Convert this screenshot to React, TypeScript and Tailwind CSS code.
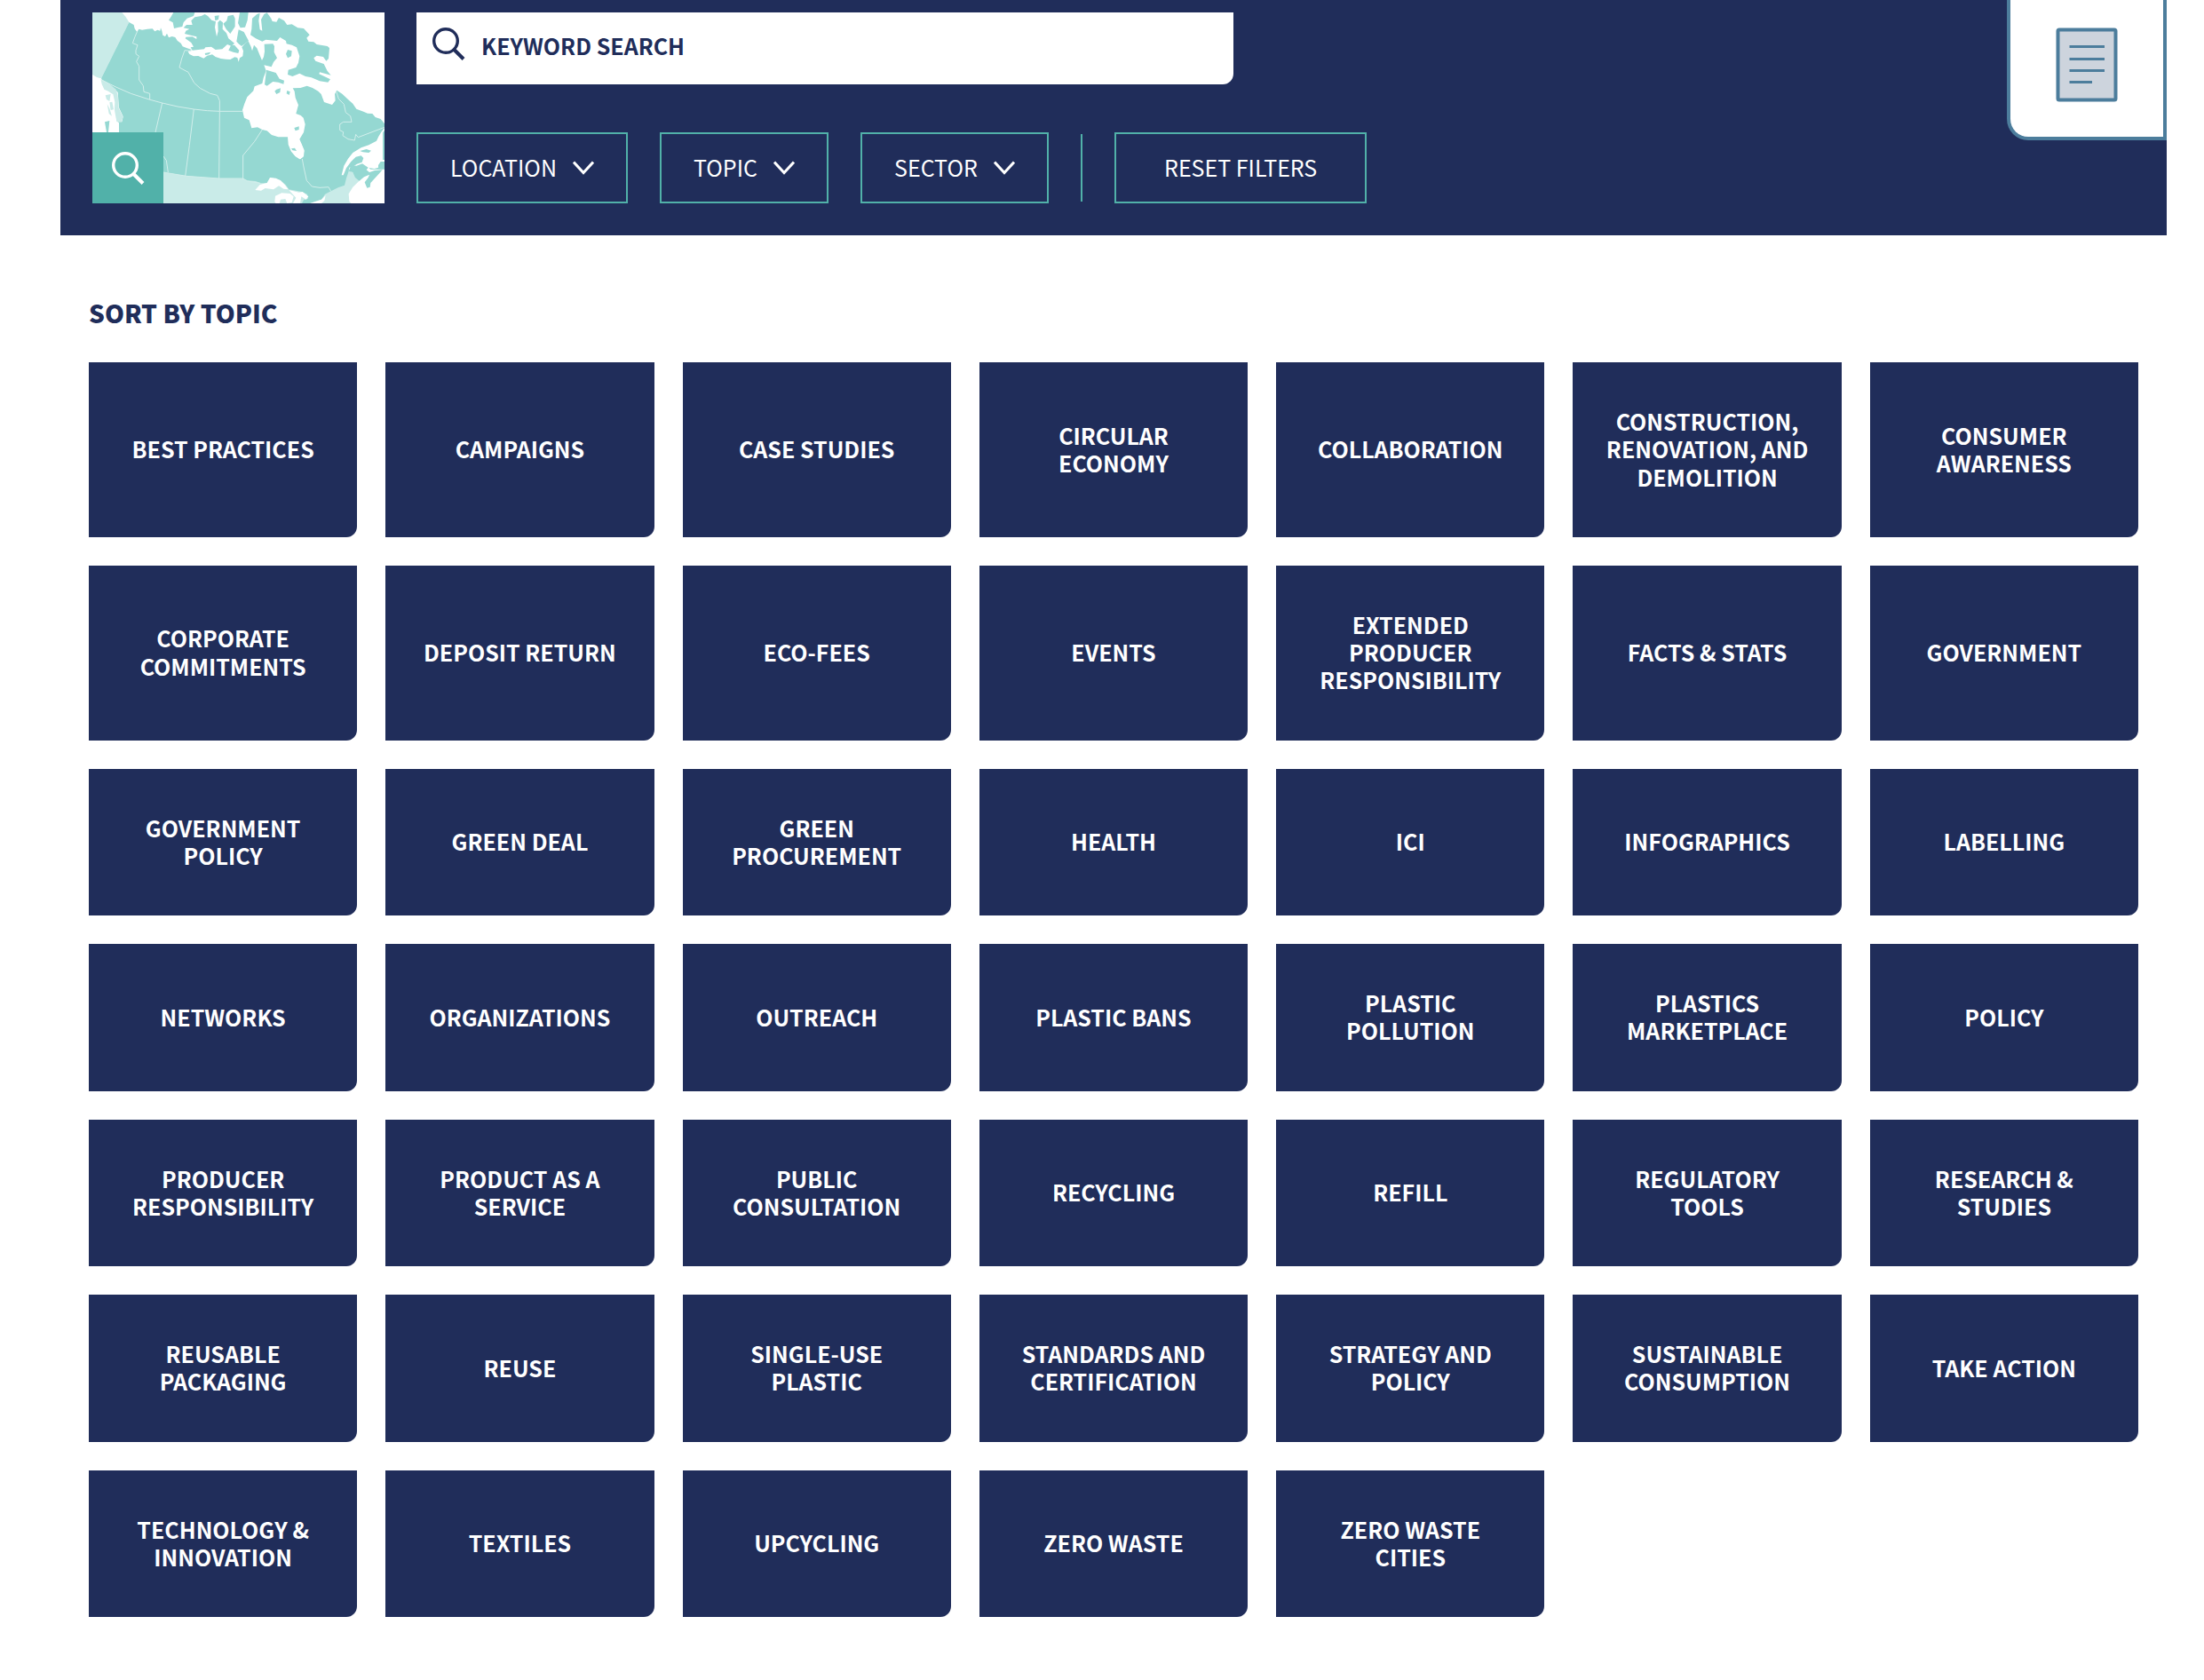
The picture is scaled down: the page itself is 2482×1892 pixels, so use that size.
import React from "react";

const topics = [
  "Best Practices", "Campaigns", "Case Studies", "Circular Economy", "Collaboration",
  "Construction, Renovation, and Demolition", "Consumer Awareness",
  "Corporate Commitments", "Deposit Return", "Eco-Fees", "Events",
  "Extended Producer Responsibility", "Facts & Stats", "Government",
  "Government Policy", "Green Deal", "Green Procurement", "Health", "ICI",
  "Infographics", "Labelling",
  "Networks", "Organizations", "Outreach", "Plastic Bans", "Plastic Pollution",
  "Plastics Marketplace", "Policy",
  "Producer Responsibility", "Product as a Service", "Public Consultation",
  "Recycling", "Refill", "Regulatory Tools", "Research & Studies",
  "Reusable Packaging", "Reuse", "Single-Use Plastic", "Standards and Certification",
  "Strategy and Policy", "Sustainable Consumption", "Take Action",
  "Technology & Innovation", "Textiles", "Upcycling", "Zero Waste", "Zero Waste Cities",
];

function SearchIcon({ className }: { className?: string }) {
  return (
    <svg viewBox="0 0 38 38" fill="none" stroke="currentColor" strokeWidth="3.4" className={className} aria-hidden="true">
      <circle cx="16" cy="16" r="13.3" />
      <path d="M25 25.500L36 36.500" strokeWidth="4" />
    </svg>
  );
}

function CanadaMap() {
  return (
    <svg viewBox="132 42 987 645" preserveAspectRatio="none" className="block h-full w-full" role="img" aria-label="Map of Canada">
      <rect x="132" y="42" width="987" height="645" fill="#fff" />
      {/* Alaska, its panhandle and the United States */}
      <g fill="#c9ebe8">
        <path d="M132 42H232L244 56L256 75L162 265L148 262L132 252Z" />
        <path d="M370 575H660L720 600H800L905 660L985 600L996 576L1012 582L1035 610L1012 632L998 655L1000 680L1006 687H370Z" />
      </g>
      <g fill="#95d8d2">
        {/* mainland */}
        <path d="M256 75L272 84L275 97L283 108L289 98L300 101L318 98L335 97L343 106L352 101L361 104L363 94L367 104L370 119L378 123L384 113L390 127L401 123L412 126L419 137L431 146L437 157L452 163L468 168L455 174L460 183L474 190L490 189L508 197L520 188L537 184L548 192L566 198L583 200L598 201L613 193L622 195L626 209L630 196L640 190L642 172L637 160L647 148L659 139L668 158L672 172L678 152L688 163L696 182L705 204L711 192L714 174L713 149L742 148L747 156L746 176L756 196L744 210L737 226L712 220L719 239L710 263L706 282L680 292L676 307L655 328L646 350L639 372L645 398L662 406L670 433L690 430L706 438L722 442L738 456L760 463L793 463L796 490L805 511L818 528L833 538L846 528L848 508L832 470L846 447L851 420L845 398L836 390L820 384L828 355L818 330L815 308L809 298L835 297L857 290L876 297L895 308L905 318L915 345L942 354L953 340L951 318L958 305L976 317L1000 340L1012 350L1024 368L1048 377L1062 383L1078 384L1088 396L1106 402L1119 418V432L1108 446L1099 461L1092 476L1066 490L1040 499L1012 516L996 536L982 560L974 592L980 592L990 568L1006 546L1022 530L1040 526L1048 534L1043 548L1026 554L1014 562L1000 566L998 578L990 602L984 626L962 634L938 646L918 656L906 674L885 680L868 687H840L846 676L860 672L858 656L840 648L796 640L785 624L766 608L736 600L722 618L700 619L684 612L656 610L641 604L560 603L450 595L372 582L222 575V430L218 412L232 412L236 394L222 364L218 312L208 302L186 302L162 265Z" />
        {/* Maritimes */}
        <path d="M998 578L1006 558L1024 560L1044 553L1064 566L1058 574L1068 582L1086 576L1112 574L1094 594L1072 618L1070 632L1060 635L1052 616L1064 600L1068 590L1050 598L1034 611L1020 600L1012 582Z" />
        <path d="M1066 567L1085 570L1098 566V558L1106 546L1119 546V572H1072Z" />
        <path d="M1036 510L1058 504L1074 509L1066 516L1046 514Z" />
        <path d="M1119 440L1113 448V540H1119Z" />
        {/* Arctic archipelago */}
        <path d="M406 42H478L474 54L452 62L440 76L436 90L424 92L408 96L404 76L390 68L398 56Z" />
        <path d="M478 58L500 54L512 48L522 54L535 68L549 73L546 92L552 124L557 106L556 76L563 68L573 76L572 98L585 112L592 130L612 146L602 156L588 150L571 166L548 168L534 158L514 160L510 166L490 168L470 170L464 160L474 158L466 144L446 130L448 125L470 124L484 132V124L458 118L444 114L448 104L460 98L440 94L450 84L470 84L466 70Z" />
        <path d="M545 54L560 52L558 66L547 70Z" />
        <path d="M590 54L608 50L614 62V90L598 114L584 98L574 80L586 70Z" />
        <path d="M630 42H659L656 68L648 92L632 94L624 78Z" />
        <path d="M626 100L644 108L660 138L636 156L626 148L619 140Z" />
        <path d="M600 154L612 152L628 170L625 180L608 176L592 170Z" />
        {/* Baffin */}
        <path d="M672 62L688 48L698 44L694 70L698 100L706 104L702 66L712 48L722 43L736 62L740 72L754 74L762 60L780 70L790 84L806 82L826 94L846 96L866 118L856 128L862 140L880 142L890 150L926 156L933 162L930 198L922 206L912 192L890 188L880 196L886 206L914 216L926 240L938 254L900 244L898 250L936 268L928 278L900 274L872 262L852 258L832 248L808 258L792 252L794 236L820 228L828 212L832 190L822 160L806 152L788 148L786 138L766 126L756 138L718 134L706 140L684 130L666 118L670 98Z" />
        <path d="M792 168L806 172L804 190L792 196L786 182Z" />
        <path d="M720 236L752 246L764 266L780 272L778 284L760 278L742 276L722 290L714 286Z" />
        <path d="M754 302L768 298L766 312L754 318L748 308Z" />
        <path d="M790 306L800 310L797 321L788 316Z" />
      </g>
      {/* Alaska panhandle */}
      <path fill="#c9ebe8" d="M160 266L185 280L212 302L218 322L221 365L236 396L230 412L214 412L208 378L204 345L200 318L186 308L172 302L164 284Z" />
      <g fill="#fff">
        {/* James Bay */}
        <path d="M792 455H832L828 470L838 486L847 510L844 530L834 538L818 528L804 512L794 488Z" />
        {/* coastal channels */}
        <path d="M132 254L160 268L160 280L172 304L174 350L178 402L174 420L178 447H132Z" />
        <path d="M172 310L202 318L208 345L206 385L214 412L222 415L222 447H190L174 447V345Z" />
        {/* Great Lakes */}
        <path d="M682 642L698 624L722 618L732 600L752 602L768 610L782 624L794 640L778 638L762 628L744 640L716 636L702 644Z" />
        <path d="M748 682L750 662L772 652L800 654L812 664L806 684L790 687L784 672L768 674L764 687H752Z" />
        <path d="M796 642L830 650L842 648L862 664L854 674L838 664L834 686L810 687L820 668Z" />
        <path d="M868 687L888 680L906 674L920 660L916 678L906 687Z" />
      </g>
      {/* islands in the bays and off the Pacific coast */}
      <g fill="#95d8d2">
        <path d="M814 432L830 427V438L818 442Z" />
        <path d="M804 502L816 500L822 510L808 508Z" />
        <path d="M512 180L532 176L526 184L514 186Z" />
        <path d="M174 412L190 408L186 447H180Z" />
      </g>
      <g fill="#c9ebe8">
        <path d="M176 322L194 318L190 342L180 336Z" />
        <path d="M190 346L199 344L204 370L194 372Z" />
        <path d="M182 352L190 366L198 392L188 384Z" />
      </g>
      {/* provincial and territorial borders */}
      <g fill="none" stroke="#d3efec" strokeWidth="3">
        <path d="M162 270L216 296L262 316L324 336L368 348L420 360L475 369L520 374L562 376H640" />
        <path d="M283 108L276 124L268 146L285 152L279 170L279 182L290 190L281 208L290 224V270L304 290L306 310L326 316V336" />
        <path d="M466 172L444 170L434 198L426 228L456 244L476 280L496 298L530 316L554 322L562 340V376L560 604" />
        <path d="M368 348L345 447" />
        <path d="M475 369L460 490L446 595" />
        <path d="M706 438L680 478L641 525V606" />
        <path d="M372 528L382 542L388 582" />
        <path d="M841 537L846 564L856 610L874 630L900 634L930 632L938 646" />
        <path d="M956 308L964 334L982 352L988 380L1004 392L1008 412L980 412L968 420L968 440L980 446L978 458L996 470L1018 474L1022 454L1030 464L1119 430" />
        <path d="M372 582L450 595L560 603H641L656 612L700 619" />
      </g>
    </svg>
  );
}

function FilterSelect({ label }: { label: string }) {
  return (
    <label className="flex h-20 items-center gap-[18px] border-2 border-[#51b1a9] px-9">
      <select aria-label={label} className="appearance-none bg-transparent leading-tight text-white outline-none">
        <option>{label}</option>
      </select>
      <svg viewBox="0 0 24 16" fill="none" stroke="currentColor" strokeWidth="3" className="pointer-events-none h-4 w-6" aria-hidden="true">
        <path d="M1 1.500L12 13.500L23 1.500" />
      </svg>
    </label>
  );
}

export default function App() {
  return (
    <div className="bg-white pb-[72px] font-['Noto_Sans_CJK_SC','Noto_Sans',sans-serif] text-[25px] text-[#202d5a]">
      <header className="mr-[42px] ml-[68px] flex items-start justify-between bg-[#202d5a]">
        <div className="flex gap-9 px-9 pt-3.5 pb-9">
          <div className="relative h-[215px] w-[329px]">
            <CanadaMap />
            <button aria-label="Open map search" className="absolute bottom-0 left-0 flex size-20 items-center justify-center bg-[#51b1a9] text-white">
              <SearchIcon className="size-[38px]" />
            </button>
          </div>
          <div className="flex flex-col justify-between">
            <label className="flex h-[81px] w-[920px] max-w-full items-start gap-[18px] rounded-br-xl bg-white px-[17px] pt-4">
              <SearchIcon className="size-[38px]" />
              <input
                type="text"
                aria-label="Keyword search"
                placeholder="KEYWORD SEARCH"
                className="h-[42px] flex-1 font-bold text-[#202d5a] outline-none placeholder:text-[#202d5a] placeholder:opacity-100"
              />
            </label>
            <div className="flex items-center gap-9 text-white">
              <FilterSelect label="LOCATION" />
              <FilterSelect label="TOPIC" />
              <FilterSelect label="SECTOR" />
              <div className="h-19 w-0.5 bg-[#51b1a9]" />
              <button className="h-20 border-2 border-[#51b1a9] px-[54px] leading-tight">RESET FILTERS</button>
            </div>
          </div>
        </div>
        <button aria-label="Saved list" className="flex h-[158px] w-[180px] items-center justify-center rounded-bl-3xl border-4 border-t-0 border-[#4c7d9c] bg-white pb-2">
          <svg viewBox="0 0 70 84" fill="none" stroke="#4c7d9c" className="h-[84px] w-[70px]" aria-hidden="true">
            <rect x="2.500" y="2.500" width="65" height="79" rx="1.500" fill="#cdd4dd" strokeWidth="4" />
            <path d="M15.500 21.500H55M15.500 35.500H55M15.500 48.500H55M15.500 61.500H41" strokeWidth="3" />
          </svg>
        </button>
      </header>
      <main className="mr-[74px] ml-[100px] pt-[69px]">
        <h2 className="text-[28px] leading-9 font-black">SORT BY TOPIC</h2>
        <nav aria-label="Topics" className="mt-[38px] grid grid-cols-7 gap-8">
          {topics.map((topic) => (
            <a
              key={topic}
              href="#"
              className="flex items-center justify-center rounded-br-xl bg-[#202d5a] px-8 pt-[51px] pb-[52px] text-center leading-tight font-bold text-white uppercase"
            >
              {topic}
            </a>
          ))}
        </nav>
      </main>
    </div>
  );
}
